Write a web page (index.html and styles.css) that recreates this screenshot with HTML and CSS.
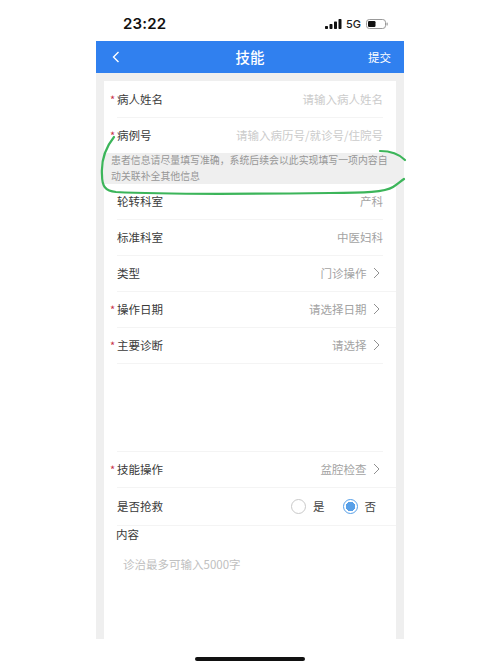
FILE: index.html
```html
<!DOCTYPE html>
<html lang="zh">
<head>
<meta charset="utf-8">
<title>技能</title>
<link rel="stylesheet" href="styles.css">
</head>
<body>
<div class="screen">
  <div class="status">
    <span class="time">23:22</span>
    <span class="status-right">
      <svg class="signal" width="17" height="10" viewBox="0 0 17 10"><rect x="0" y="7" width="3" height="3" rx=".7"/><rect x="4.5" y="5" width="3" height="5" rx=".7"/><rect x="9" y="2.5" width="3" height="7.5" rx=".7"/><rect x="13.5" y="0" width="3" height="10" rx=".7"/></svg>
      <span class="net">5G</span>
      <svg class="battery" width="22" height="10" viewBox="0 0 22 10"><rect x=".5" y=".5" width="19" height="9" rx="2.8" fill="none" stroke="#999"/><rect x="2" y="2" width="7.5" height="6" rx="1.2" fill="#111"/><rect x="20.5" y="3.5" width="1.2" height="3" rx=".6" fill="#999"/></svg>
    </span>
  </div>
  <div class="app">
    <header class="nav">
      <svg class="back" width="8" height="12" viewBox="0 0 8 12"><path d="M6.5 1 1.5 6l5 5" fill="none" stroke="#fff" stroke-width="1.4"/></svg>
      <span class="title">技能</span>
      <span class="submit">提交</span>
    </header>
    <main class="card">
      <div class="row top"><span class="label req">病人姓名</span><span class="value ph">请输入病人姓名</span></div>
      <div class="row plain first"><span class="label req">病例号</span><span class="value ph">请输入病历号/就诊号/住院号</span></div>
      <div class="tip">患者信息请尽量填写准确，系统后续会以此实现填写一项内容自动关联补全其他信息</div>
      <div class="row"><span class="label">轮转科室</span><span class="value">产科</span></div>
      <div class="row"><span class="label">标准科室</span><span class="value">中医妇科</span></div>
      <div class="row wide"><span class="label">类型</span><span class="value">门诊操作<svg class="chev" width="7" height="12" viewBox="0 0 7 12"><path d="M1 1l5 5-5 5" /></svg></span></div>
      <div class="row wide"><span class="label req">操作日期</span><span class="value">请选择日期<svg class="chev" width="7" height="12" viewBox="0 0 7 12"><path d="M1 1l5 5-5 5" /></svg></span></div>
      <div class="row"><span class="label req">主要诊断</span><span class="value">请选择<svg class="chev" width="7" height="12" viewBox="0 0 7 12"><path d="M1 1l5 5-5 5" /></svg></span></div>
      <div class="blank"></div>
      <div class="row wide"><span class="label req">技能操作</span><span class="value">盆腔检查<svg class="chev" width="7" height="12" viewBox="0 0 7 12"><path d="M1 1l5 5-5 5" /></svg></span></div>
      <div class="row wide tall"><span class="label">是否抢救</span>
        <span class="radios">
          <span class="radio"><i class="dot"></i>是</span>
          <span class="radio"><i class="dot on"></i>否</span>
        </span>
      </div>
      <div class="content-label">内容</div>
      <div class="content-ph">诊治最多可输入5000字</div>
    </main>
  </div>
  <div class="home"></div>
  <svg class="mark" width="500" height="667" viewBox="0 0 500 667">
    <path d="M114 137C106 147 101 161 102 175C102 186 105 191 116 192C170 195 250 194 330 193C365 193 385 192 393 187C398 184 401 181 404 179" />
    <path d="M380 151C391 151 399 154 405 160" />
  </svg>
</div>
</body>
</html>
```
FILE: styles.css
```css
* { box-sizing: border-box; }
html, body { margin: 0; padding: 0; background: #fff; }
body { font-family: "Noto Sans CJK SC", "Liberation Sans", sans-serif; color: #333; }
.screen { position: relative; width: 500px; height: 667px; overflow: hidden; }

.status { height: 41px; padding: 7px 112px 0 123px; display: flex; justify-content: space-between; align-items: center; }
.time { font: 600 15px/18px Inter, "Liberation Sans", sans-serif; color: #111; letter-spacing: .2px; }
.status-right { display: flex; align-items: center; gap: 4px; }
.signal { fill: #111; }
.net { font: 500 11px/14px Inter, "Liberation Sans", sans-serif; color: #222; }
.battery { margin-left: 1px; }

.app { width: 308px; height: 598px; margin: 0 auto; background: #efefef; overflow: hidden; }
.nav { height: 32px; background: #3080ef; color: #fff; display: flex; align-items: center; justify-content: space-between; padding: 0 13px 0 16px; position: relative; }
.title { position: absolute; left: 0; right: 0; text-align: center; font-size: 14.5px; font-weight: 500; line-height: 30px; }
.submit { font-size: 11.5px; line-height: 30px; }

.card { margin: 8px 8px 0; height: 558px; background: #fff; display: flex; flex-direction: column; }
.row { height: 36px; flex: none; margin: 0 13px; display: flex; align-items: center; justify-content: space-between; border-bottom: 1px solid #f4f4f4; }
.row.top { height: 37px; }
.row.plain { border-bottom: 0; }
.row.first { height: 35px; }
.row.wide { margin-right: 0; padding-right: 13px; }
.row.tall { height: 37.5px; }
.label { font-size: 11.5px; color: #3a3a3a; position: relative; top: -.5px; }
.label.req::before { content: "*"; position: absolute; left: -7px; top: 0; color: #c8324a; font-size: 11px; }
.value { font-size: 11.5px; color: #a3a3a3; display: flex; align-items: center; position: relative; top: -.5px; }
.value.ph { color: #cbcbcb; }
.chev { margin-left: 6px; margin-right: 3.5px; fill: none; stroke: #909090; stroke-width: 1; }
.tip { height: 31px; flex: none; background: #efefef; color: #979797; font-size: 9.9px; line-height: 15.5px; padding: 0 6px 0 7px; }
.blank { height: 88px; flex: none; margin: 0 13px; border-bottom: 1px solid #f4f4f4; }

.radios { display: flex; align-items: center; gap: 18px; margin-right: 7px; }
.radio { display: flex; align-items: center; gap: 7px; font-size: 11.5px; color: #444; }
.dot { width: 15px; height: 15px; border-radius: 50%; border: 1px solid #c9c9c9; display: block; background: #fff; }
.dot.on { border-color: #58a0e8; background: radial-gradient(circle, #58a0e8 0 4.5px, #fff 5px); }

.content-label { font-size: 11.5px; line-height: 16px; color: #3a3a3a; margin: 0 0 0 12px; }
.content-ph { font-size: 11.5px; line-height: 16px; color: #c0c0c0; margin: 14px 0 0 19px; }

.home { position: absolute; left: 195px; top: 657px; width: 110px; height: 4px; border-radius: 2px; background: #111; }
.mark { position: absolute; left: 0; top: 0; pointer-events: none; fill: none; stroke: #3cb55a; stroke-width: 2.2; stroke-linecap: round; }
```
